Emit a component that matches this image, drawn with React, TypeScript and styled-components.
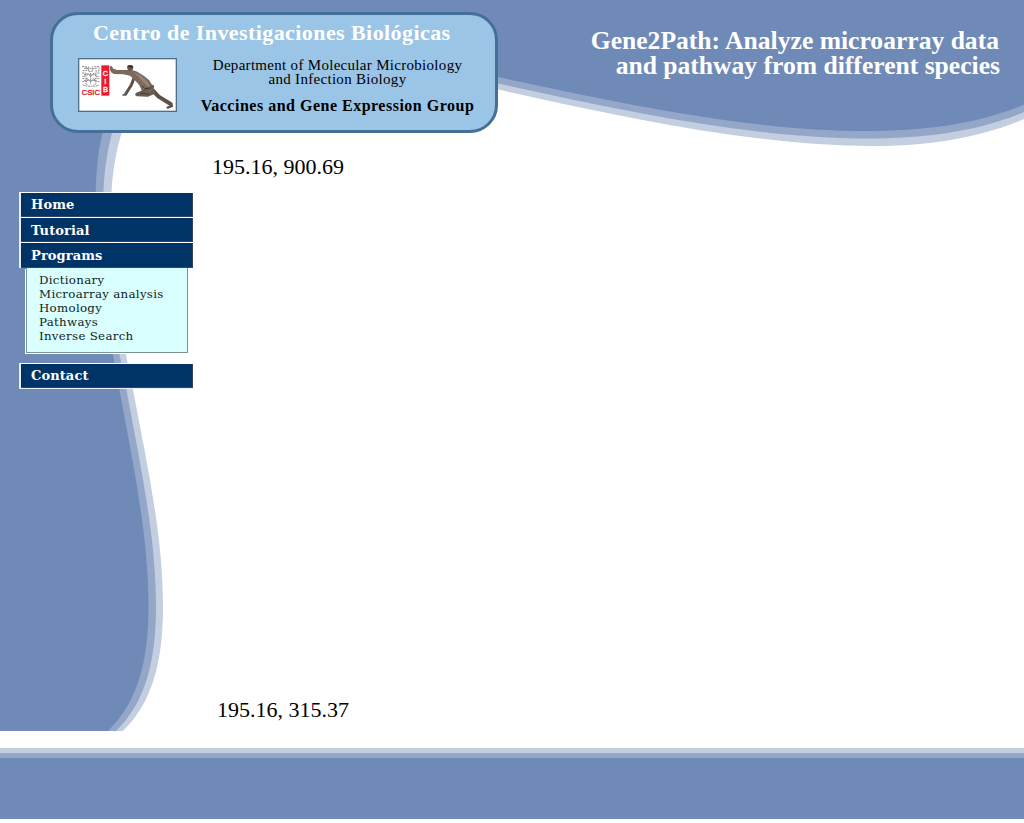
import React from 'react';
import styled, { createGlobalStyle } from 'styled-components';

const colors = {
  blue: '#6f8ab7',
  mid: '#94a7c9',
  light: '#c4cee1',
  navy: '#003366',
};

const GlobalStyle = createGlobalStyle`
  * { box-sizing: border-box; }
  body { margin: 0; background: #fff; overflow: hidden; }
`;

const Page = styled.div`
  position: relative;
  display: flex;
  flex-direction: column;
  width: 1024px;
  height: 823px;
  font-family: 'Liberation Serif', serif;
`;

const Backdrop = styled.svg`
  position: absolute;
  inset: 0;
  z-index: -1;
`;

const Header = styled.header`
  display: flex;
  justify-content: space-between;
  height: 133px;
  padding: 12px 24px 0 50px;
`;

const Card = styled.section`
  display: grid;
  grid-template-columns: 99px 1fr;
  grid-template-rows: 43px 1fr;
  width: 448px;
  height: 121px;
  border: 3px solid #456f98;
  border-radius: 28px;
  background: #9bc5e6;
  padding-left: 25px;
`;

const Institute = styled.h1`
  grid-column: 1 / 3;
  margin: 0;
  padding: 6px 0 0 15px;
  color: #fff;
  font-size: 22px;
  line-height: 24px;
  letter-spacing: 0.42px;
  white-space: nowrap;
`;

const Group = styled.div`
  display: flex;
  flex-direction: column;
  align-items: center;
  margin-left: 3px;
  white-space: nowrap;
`;

const Department = styled.p`
  margin: 0;
  text-align: center;
  font-size: 15px;
  line-height: 14px;
  letter-spacing: 0.3px;
`;

const GroupName = styled.strong`
  margin-top: 12px;
  font-size: 16px;
  line-height: 16px;
  letter-spacing: 0.5px;
`;

const Title = styled.h2`
  display: flex;
  flex-direction: column;
  align-items: flex-end;
  margin: 16px 0 0;
  color: #fff;
  font-size: 25.6px;
  line-height: 25px;
`;

const TitleLine = styled.span<{ $inset?: number }>`
  padding-right: ${(p) => p.$inset ?? 0}px;
`;

const Body = styled.div`
  display: flex;
  height: 615px;
`;

const Sidebar = styled.nav`
  width: 193px;
  padding: 59px 0 0 19px;
`;

const MenuItem = styled.a<{ $last?: boolean; $drop?: number }>`
  display: block;
  height: ${(p) => (p.$last ? 26 : 25.2)}px;
  margin-top: ${(p) => (p.$last ? 10 : 0)}px;
  border-left: 2px solid #e9edf4;
  border-top: 1.5px solid #fff;
  border-bottom: ${(p) => (p.$last ? '1px solid #e9edf4' : '0')};
  background: ${colors.navy};
  box-shadow: inset -1px -1px #35465c;
  color: #fff;
  padding: ${(p) => p.$drop ?? 0}px 0 0 10px;
  font-family: 'DejaVu Serif', serif;
  font-size: 13px;
  font-weight: bold;
  letter-spacing: 0.1px;
  line-height: 23px;
`;

const Submenu = styled.ul`
  width: 162px;
  height: 85px;
  margin: 0 0 0 7px;
  padding: 5px 0 0 12px;
  list-style: none;
  background: #d9ffff;
  border: 1px solid #7c9494;
  border-top: 0;
  box-shadow: -1px 1px #fff;
`;

const SubItem = styled.li`
  font-family: 'DejaVu Serif', serif;
  font-size: 11.8px;
  line-height: 14px;
  letter-spacing: 0.3px;
  color: #122;
  white-space: nowrap;
`;

const Content = styled.main`
  display: flex;
  flex: 1;
  flex-direction: column;
  justify-content: space-between;
  padding: 21px 0 25px 19px;
  font-size: 22px;
  line-height: 26px;
`;

const Coordinates = styled.p<{ $indent?: number }>`
  margin: 0 0 0 ${(p) => p.$indent ?? 0}px;
`;

const Footer = styled.footer`
  height: 71px;
  background: ${colors.blue};
  border-top: 5px solid ${colors.light};
  box-shadow: inset 0 5px ${colors.mid};
`;

const LogoText = styled.text`
  font-family: 'Liberation Sans', sans-serif;
`;

function Logo() {
  return (
    <svg width="99" height="54" viewBox="24 23 297 162">
      <rect x="26" y="25" width="293" height="158" fill="#fff" stroke="#4f6f88" strokeWidth="4" />
      <g fill="none" stroke="#8a8a8a" strokeWidth="3" strokeDasharray="6 2">
        <path d="M36 49h14v12H37M55 48v15h12V48M73 49h14v13H74M36 68h12v10H36M88 68H76v10h12M37 84h14v10H37M88 84H74v10h14M62 68v34M52 68l10 10 10-10M52 84l10 10 10-10M38 104q24 8 49 0M42 54h40M42 73h40M42 90h40M46 99l8 5M79 99l-8 5" />
      </g>
      <LogoText x="35" y="134" fontSize="22" fill="#d31b2b" stroke="#d31b2b" strokeWidth="1" textLength="55" lengthAdjust="spacingAndGlyphs">CSIC</LogoText>
      <rect x="94" y="45" width="24" height="91" fill="#e91d2d" />
      <g fill="#fff" stroke="#fff" strokeWidth="1" fontSize="22" textAnchor="middle">
        <LogoText x="106" y="76">C</LogoText>
        <LogoText x="106" y="100">I</LogoText>
        <LogoText x="106" y="124">B</LogoText>
      </g>
      {/* far arm and rear leg */}
      <g fill="none" stroke="#5f5048" strokeLinecap="round" strokeLinejoin="round">
        <path d="M194 78L184 104L167 131" strokeWidth="9" />
        <path d="M167 133l-8 1" strokeWidth="5" />
        <path d="M244 116L266 139L302 161" strokeWidth="12" />
        <path d="M303 162l3 5-13 5" strokeWidth="7" />
      </g>
      {/* torso and near arm */}
      <path d="M120 48l5-1 5 8 12 4 30 0 10-1 17 5 20 12 18 14 11 17 2 12-7 9-14 3-13-8-8-17-12-14-16-15-20-4-28-1-7-4-5-8z" fill="#7b695e" />
      {/* folded leg */}
      <path d="M247 109L221 124L201 132L232 134L252 125" fill="none" stroke="#6b5a50" strokeWidth="11" strokeLinecap="round" strokeLinejoin="round" />
      <path d="M192 67l18 7 17 14 12 17-2 8-14-14-15-17z" fill="#93847a" />
      <path d="M216 107l9 8 16-2M212 129l25 2" fill="none" stroke="#46382f" strokeWidth="3" />
      <path d="M171 52q1-7 9-7 9 0 10 7l-3 8-7 2-6-3z" fill="#67564b" />
      <path d="M171 51q1-7 9-7 9 0 10 6l-2 3-10-3z" fill="#3d3029" />
    </svg>
  );
}

const submenu = ['Dictionary', 'Microarray analysis', 'Homology', 'Pathways', 'Inverse Search'];

export default function App() {
  return (
    <Page>
      <GlobalStyle />
      <Backdrop width="1024" height="823" viewBox="0 0 1024 823">
        <path fill={colors.light} d="M0 0H1024V119C978 138.500 927 146 872 146C755 146 622 117 498 89.500L140 80Q126 106 121.500 133C115 155 111 180 111 210C111 270 121 332 133 390C147 464 163 535 163 607C163 662 152 703 123 731H0z" />
        <path fill={colors.mid} d="M0 0H1024V112C978 131.500 925 138.500 867 138.500C750 138.500 620 110 498 83.500L130 80Q116 106 112 133C106 155 103 180 103 210C103 270 115 332 126.500 390C140 464 156 535 156 607C156 662 145 703 116 731H0z" />
        <path fill={colors.blue} d="M0 0H1024V104.500C978 124 925 131 865 131C750 131 620 103 498 77L120 80Q106 106 102.500 133C97 155 95.500 180 95.500 210C95.500 270 109 332 119.500 390C133 464 148.500 535 148.500 607C148.500 662 137 703 108 731H0z" />
      </Backdrop>
      <Header>
        <Card>
          <Institute>Centro de Investigaciones Biológicas</Institute>
          <Logo />
          <Group>
            <Department>
              Department of Molecular Microbiology
              <br />
              and Infection Biology
            </Department>
            <GroupName>Vaccines and Gene Expression Group</GroupName>
          </Group>
        </Card>
        <Title>
          <TitleLine $inset={1}>Gene2Path: Analyze microarray data</TitleLine>
          <TitleLine>and pathway from different species</TitleLine>
        </Title>
      </Header>
      <Body>
        <Sidebar>
          <MenuItem>Home</MenuItem>
          <MenuItem $drop={0.6}>Tutorial</MenuItem>
          <MenuItem $drop={0.8}>Programs</MenuItem>
          <Submenu>
            {submenu.map((label) => (
              <SubItem key={label}>{label}</SubItem>
            ))}
          </Submenu>
          <MenuItem $last $drop={0.8}>Contact</MenuItem>
        </Sidebar>
        <Content>
          <Coordinates>195.16, 900.69</Coordinates>
          <Coordinates $indent={5}>195.16, 315.37</Coordinates>
        </Content>
      </Body>
      <Footer />
    </Page>
  );
}
